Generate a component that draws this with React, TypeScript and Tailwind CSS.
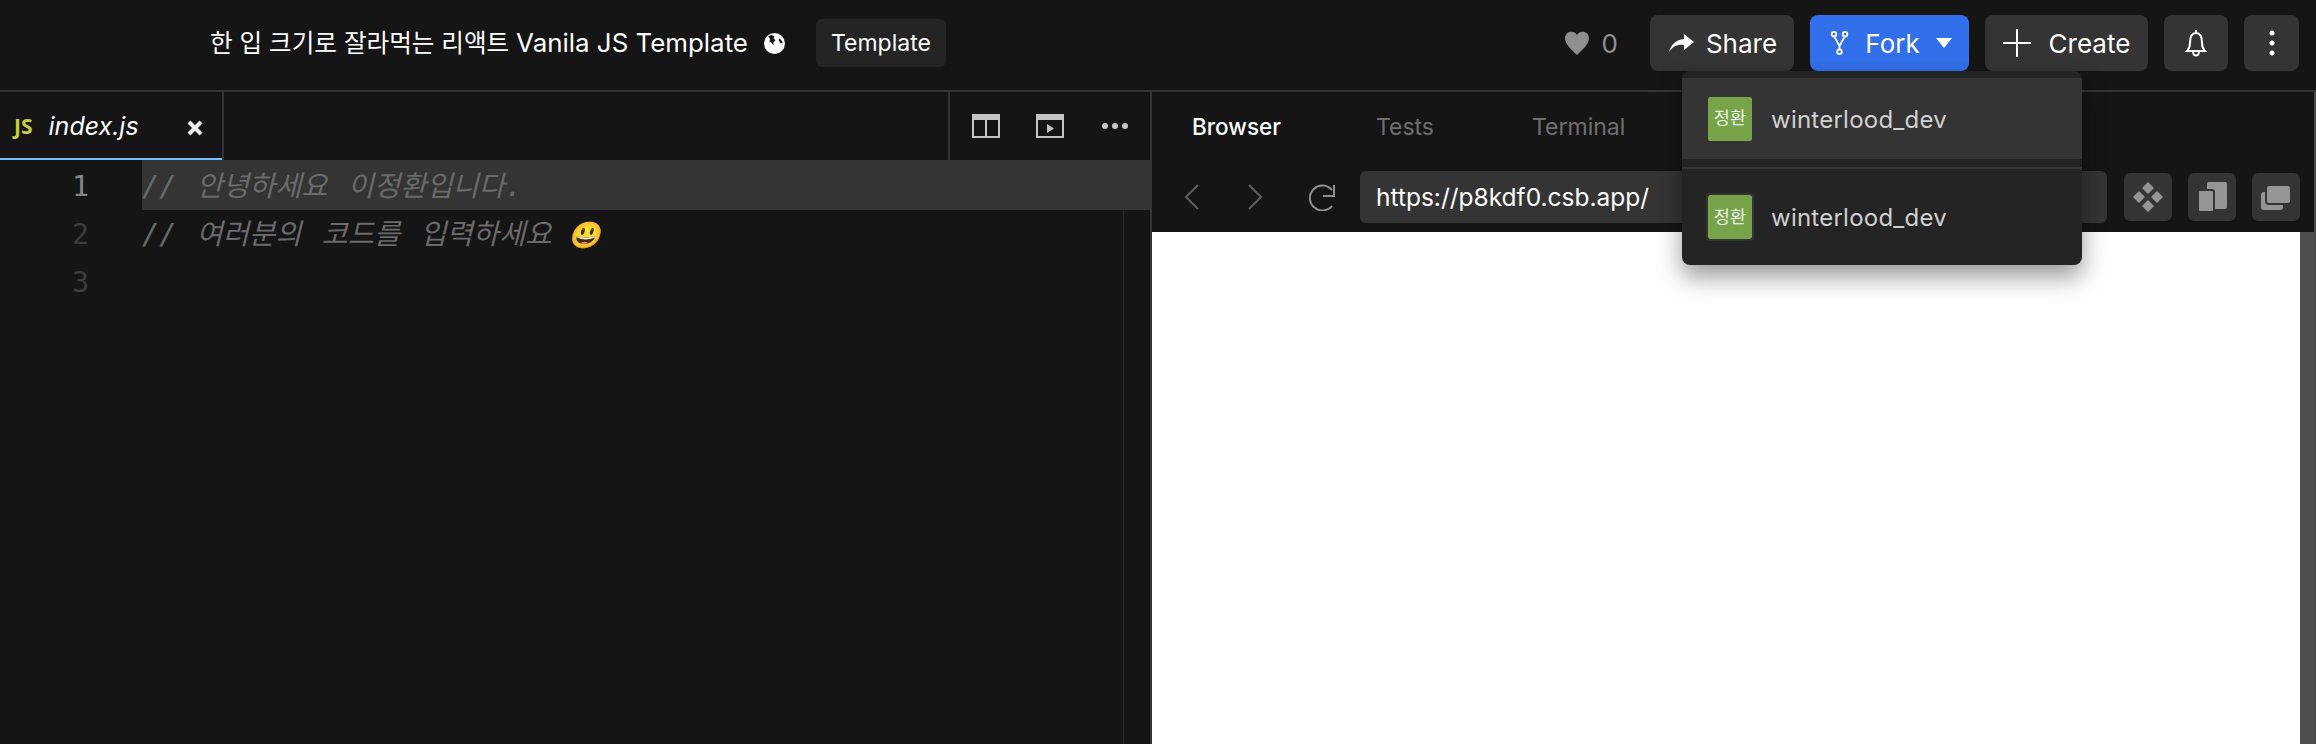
import React from 'react';

const sans = 'font-["Inter","Noto_Sans_CJK_KR",sans-serif]';

const Avatar = ({ring}: {ring?: boolean}) => (
  <div
    className={`flex h-11 w-11 shrink-0 items-center justify-center rounded-[2px] bg-[#77a349] text-[17.5px] text-[#eef3e6] ${ring ? 'outline-2 outline-[#343434]' : ''}`}>
    정환
  </div>
);

const HeaderButton = ({children, className}: {children: React.ReactNode; className: string}) => (
  <button className={`flex h-14 items-center justify-center rounded-lg text-[26px] text-white ${className}`}>
    {children}
  </button>
);

const ToolButton = ({children}: {children: React.ReactNode}) => (
  <div className="flex h-12 w-12 items-center justify-center rounded-md bg-[#343434]">{children}</div>
);

const Header = () => (
  <header className="flex h-[92px] items-center border-b-2 border-[#343434] pr-[17px] pb-1 pl-[210px]">
    <span className="text-[25.9px] text-white">
      <span className="text-[24.6px]">한 입 크기로 잘라먹는 리액트 </span>
      Vanila JS Template
    </span>
    <svg viewBox="0 0 20 20" className="ml-4 h-[21px] w-[21px]">
      <circle cx="10" cy="10" r="10" fill="#fff" />
      <path d="M4 3l3-1 3 1-1 2 2 2-2 2 0 3-2-3-2-1 1-2zM15 5l3 4-2 1-2-3z" fill="#151515" />
    </svg>
    <span className="ml-[31px] flex h-12 w-[130px] items-center justify-center rounded-md bg-[#242424] text-[23px] text-white">
      Template
    </span>
    <div className="ml-auto flex items-center">
      <svg viewBox="0 0 24 24" className="h-[26px] w-[26px]" fill="#8f8f8f">
        <path d="M12 23C6 17 1 13 1 7.500 1 4 3.600 1.500 6.800 1.500c2.100 0 4 1 5.200 3 1.200-2 3.100-3 5.200-3C20.400 1.500 23 4 23 7.500 23 13 18 17 12 23z" />
      </svg>
      <span className="mr-[32px] ml-[12px] text-[26px] text-[#8f8f8f]">0</span>
      <HeaderButton className="w-36 bg-[#343434] pl-0.5">
        <svg viewBox="0 0 25 18" className="mr-[12px] h-[18px] w-[25px]" fill="#fff">
          <path d="M15 0l10 8-10 8v-5C9 10 4 12 0 18 2 10 7 6 15 5z" />
        </svg>
        Share
      </HeaderButton>
      <HeaderButton className="ml-4 w-[159px] bg-[#3170ea] pl-[3px]">
        <svg viewBox="0 0 19 24" className="mr-4 h-6 w-[19px]" fill="none" stroke="#fff" strokeWidth="1.800">
          <circle cx="4" cy="3.200" r="2.300" />
          <circle cx="15" cy="3.200" r="2.300" />
          <circle cx="9.500" cy="20.800" r="2.300" />
          <path d="M4.300 5.500l5.200 9.500v3.500M14.700 5.500l-5.200 9.500" />
        </svg>
        Fork
        <svg viewBox="0 0 16 10" className="ml-4 h-2.5 w-4" fill="#fff">
          <path d="M0 0h16L8 10z" />
        </svg>
      </HeaderButton>
      <HeaderButton className="ml-4 w-[163px] bg-[#343434]">
        <svg viewBox="0 0 28 28" className="mr-[18px] h-7 w-7" stroke="#fff" strokeWidth="2">
          <path d="M14 0v28M0 14h28" />
        </svg>
        Create
      </HeaderButton>
      <HeaderButton className="ml-4 w-16 bg-[#343434]">
        <svg viewBox="0 0 24 28" className="h-7 w-6" fill="none" stroke="#fff" strokeWidth="2">
          <path d="M12 1v3M3 22c2-2 3-4 3-8 0-6 2-10 6-10s6 4 6 10c0 4 1 6 3 8zM9 22c0 6 6 6 6 0" />
        </svg>
      </HeaderButton>
      <HeaderButton className="ml-4 w-[55px] bg-[#343434]">
        <svg viewBox="0 0 6 28" className="h-7 w-1.5" fill="#fff">
          <circle cx="3" cy="4" r="2.500" />
          <circle cx="3" cy="14" r="2.500" />
          <circle cx="3" cy="24" r="2.500" />
        </svg>
      </HeaderButton>
    </div>
  </header>
);

const EditorPane = () => (
  <section className="flex w-[1152px] shrink-0 flex-col border-r-2 border-[#343434]">
    <div className="flex h-[68px] shrink-0">
      <div className="relative flex w-[224px] items-center border-r-2 border-[#343434] pt-0.5 pl-[14px]">
        <span className='font-["Open_Sans",sans-serif] text-[21px] font-bold text-[#cbcb41]'>JS</span>
        <span className="ml-[16px] text-[25px] text-white italic">index.js</span>
        <svg viewBox="0 0 16 16" className="absolute top-[28px] left-[187px] h-4 w-4" stroke="#eee" strokeWidth="4">
          <path d="M2 2l12 12M14 2L2 14" />
        </svg>
        <div className="absolute bottom-0 left-0 h-0.5 w-[222px] bg-[#75beff]" />
      </div>
      <div className="ml-auto flex w-[202px] items-center border-l-2 border-[#343434]">
        <svg viewBox="0 0 28 24" className="ml-[22px] h-6 w-7" fill="none" stroke="#c5c5c5" strokeWidth="2">
          <path d="M1 5h26v18H1zM14 5v18" />
          <path d="M0 0h28v6H0z" fill="#c5c5c5" stroke="none" />
        </svg>
        <svg viewBox="0 0 28 24" className="ml-9 h-6 w-7" fill="none" stroke="#c5c5c5" strokeWidth="2">
          <path d="M1 5h26v18H1z" />
          <path d="M0 0h28v6H0zM11 10l7 4.500-7 4.500z" fill="#c5c5c5" stroke="none" />
        </svg>
        <svg viewBox="0 0 26 6" className="ml-[38px] h-1.5 w-[26px]" fill="#c5c5c5">
          <circle cx="3" cy="3" r="3" />
          <circle cx="13" cy="3" r="3" />
          <circle cx="23" cy="3" r="3" />
        </svg>
      </div>
    </div>
    <div className='relative min-h-0 flex-1 font-["DejaVu_Sans_Mono","Noto_Sans_CJK_KR",monospace] text-[28.5px] [word-spacing:3px]'>
      <div className="absolute top-[50px] right-[26px] bottom-0 w-px bg-[#2a2a2a]" />
      <div className="flex h-[50px] leading-[53px]">
        <span className="w-[142px] shrink-0 pl-[72px] text-[#858585]">1</span>
        <span className="flex-1 bg-[#343434] text-[#6a6a6a] italic">// 안녕하세요 이정환입니다.</span>
      </div>
      <div className="flex h-[48px] leading-[50px]">
        <span className="w-[142px] shrink-0 pl-[72px] text-[#3c3c3c]">2</span>
        <span className="flex-1 text-[#6a6a6a] italic">
          // 여러분의 코드를 입력하세요 <span className="-ml-1 text-[26px]">😃</span>
        </span>
      </div>
      <div className="flex h-[48px] leading-[50px]">
        <span className="w-[142px] shrink-0 pl-[72px] text-[#3c3c3c]">3</span>
      </div>
    </div>
  </section>
);

const BrowserPane = () => (
  <section className="flex min-w-0 flex-1 flex-col border-r-2 border-[#4a4a4a]">
    <div className="flex h-[68px] shrink-0 items-center pt-0.5 pl-10 text-[23px] text-[#6f6f6f]">
      <span className="text-[22.5px] font-medium text-white">Browser</span>
      <span className="ml-[95px]">Tests</span>
      <span className="ml-[98px]">Terminal</span>
    </div>
    <div className="flex h-[72px] shrink-0 items-center pt-0.5 pl-8">
      <svg viewBox="0 0 15 26" className="h-[26px] w-[15px]" fill="none" stroke="#5e5e5e" strokeWidth="2">
        <path d="M14 1L2 13l12 12" />
      </svg>
      <svg viewBox="0 0 15 26" className="ml-[49px] h-[26px] w-[15px]" fill="none" stroke="#5e5e5e" strokeWidth="2">
        <path d="M1 1l12 12L1 25" />
      </svg>
      <svg viewBox="0 0 28 27" className="ml-[45px] h-[27px] w-7" fill="none" stroke="#8f8f8f" strokeWidth="2">
        <path d="M26 1v11H15M24 6a12.500 12.500 0 1 0 0 16" />
      </svg>
      <div className="ml-[24px] flex h-[52px] w-[747px] items-center rounded-md bg-[#343434] pl-4 text-[24.5px] text-white">
        https://p8kdf0.csb.app/
      </div>
      <div className="ml-[17px] flex gap-4">
        <ToolButton>
          <svg viewBox="0 0 32 32" className="h-8 w-8" fill="#959595" stroke="#959595" strokeWidth="1.500" strokeLinejoin="round">
            <path d="M16 2l5 5-5 5-5-5zM7 11l5 5-5 5-5-5zM25 11l5 5-5 5-5-5zM16 20l5 5-5 5-5-5z" />
          </svg>
        </ToolButton>
        <ToolButton>
          <svg viewBox="0 0 29 30" className="h-[30px] w-[29px]">
            <rect x="9" y="0" width="20" height="27" rx="2" fill="#959595" />
            <rect x="0" y="8" width="16" height="22" rx="2" fill="#959595" stroke="#343434" strokeWidth="2" />
          </svg>
        </ToolButton>
        <ToolButton>
          <svg viewBox="0 0 30 25" className="h-[25px] w-[30px]">
            <rect x="0" y="7" width="22" height="18" rx="3" fill="#959595" />
            <rect x="5" y="0" width="25" height="19" rx="3" fill="#959595" stroke="#343434" strokeWidth="2" />
          </svg>
        </ToolButton>
      </div>
    </div>
    <div className="flex min-h-0 flex-1">
      <div className="flex-1 bg-white" />
      <div className="w-[14px] bg-[#4e4e4e]" />
    </div>
  </section>
);

const ForkMenu = () => (
  <div className="absolute top-[71px] left-[1682px] w-[400px] rounded-lg bg-[#242424] pt-[7px] pb-[26px] text-[24px] tracking-[0.01em] text-[#d0d0d0] shadow-[0_12px_24px_rgba(0,0,0,0.4)]">
    <div className="flex h-[81px] items-center gap-[19px] bg-[#343434] pl-[26px]">
      <Avatar />
      <span className="pt-[2px]">winterlood_dev</span>
    </div>
    <div className="mt-2 h-0.5 bg-[#343434]" />
    <div className="flex h-[70px] items-center gap-[19px] pt-[26px] pl-[26px]">
      <Avatar ring />
      <span className="pt-[2px]">winterlood_dev</span>
    </div>
  </div>
);

export default function App() {
  return (
    <div className={`relative flex h-[744px] w-[2316px] flex-col overflow-hidden bg-[#151515] ${sans}`}>
      <Header />
      <main className="flex min-h-0 flex-1">
        <EditorPane />
        <BrowserPane />
      </main>
      <ForkMenu />
    </div>
  );
}
